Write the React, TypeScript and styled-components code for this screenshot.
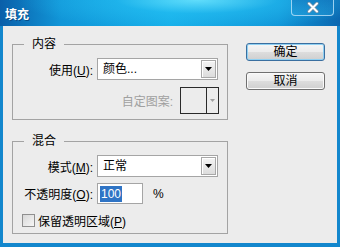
import styled, { createGlobalStyle } from 'styled-components';

const GlobalStyle = createGlobalStyle`
    html, body {
        margin: 0;
        padding: 0;
        background: #ececec;
    }
    * {
        box-sizing: border-box;
    }
`;

const FONT = `"Liberation Sans", "Noto Sans CJK SC", sans-serif`;

const App = () => {
    return (
        <Window>
            <GlobalStyle />
            <TitleBar>
                <Title>填充</Title>
                <CloseButton>
                    <svg width="14" height="11" viewBox="0 0 14 11">
                        <path d="M3 1.5 L11 9.5 M11 1.5 L3 9.5" stroke="#6f8ea8" strokeWidth="3.6" strokeLinecap="round" />
                        <path d="M3 1.5 L11 9.5 M11 1.5 L3 9.5" stroke="#ffffff" strokeWidth="2" strokeLinecap="round" />
                    </svg>
                </CloseButton>
            </TitleBar>
            <Body>
                <LeftColumn>
                    <Group>
                        <Legend>内容</Legend>
                        <Row>
                            <Label>使用(<u>U</u>):</Label>
                            <Select>
                                <SelectText>颜色...</SelectText>
                                <ArrowButton>
                                    <svg width="7" height="4" viewBox="0 0 7 4">
                                        <path d="M0 0 H7 L3.5 4 Z" fill="#000" />
                                    </svg>
                                </ArrowButton>
                            </Select>
                        </Row>
                        <PatternRow>
                            <DisabledLabel>自定图案:</DisabledLabel>
                            <PatternBox>
                                <PatternSwatch />
                                <PatternArrow>
                                    <svg width="5" height="3" viewBox="0 0 5 3">
                                        <path d="M0 0 H5 L2.5 3 Z" fill="#a0a0a0" />
                                    </svg>
                                </PatternArrow>
                            </PatternBox>
                        </PatternRow>
                    </Group>
                    <Group $bottom>
                        <Legend>混合</Legend>
                        <Row>
                            <Label>模式(<u>M</u>):</Label>
                            <Select>
                                <SelectText>正常</SelectText>
                                <ArrowButton>
                                    <svg width="7" height="4" viewBox="0 0 7 4">
                                        <path d="M0 0 H7 L3.5 4 Z" fill="#000" />
                                    </svg>
                                </ArrowButton>
                            </Select>
                        </Row>
                        <OpacityRow>
                            <Label>不透明度(<u>O</u>):</Label>
                            <NumberInput>
                                <Selected>100</Selected>
                            </NumberInput>
                            <Unit>%</Unit>
                        </OpacityRow>
                        <CheckRow>
                            <CheckBox />
                            <span>保留透明区域(<u>P</u>)</span>
                        </CheckRow>
                    </Group>
                </LeftColumn>
                <RightColumn>
                    <Button $default>确定</Button>
                    <Button>取消</Button>
                </RightColumn>
            </Body>
        </Window>
    );
};

const Window = styled.div`
    width: 340px;
    height: 247px;
    display: flex;
    flex-direction: column;
    font-family: ${FONT};
    font-size: 12px;
    color: #000;
`;

const TitleBar = styled.div`
    height: 26px;
    flex-shrink: 0;
    display: flex;
    align-items: flex-start;
    justify-content: space-between;
    padding: 0 6px 0 5px;
    background:
        radial-gradient(ellipse 180px 30px at 58% 0%, rgba(110, 230, 255, 0.85) 0%, rgba(40, 195, 245, 0.5) 45%, rgba(40, 195, 245, 0) 100%),
        linear-gradient(to right, #0a5fa9 0%, #1196d8 18%, #16aee8 50%, #1196d8 82%, #0a67b0 100%);
`;

const Title = styled.div`
    align-self: center;
    color: #fff;
    font-family: "Noto Sans CJK SC", sans-serif;
    font-weight: 700;
    font-size: 12px;
    line-height: 14px;
    text-shadow: 1px 1px 0 rgba(0, 40, 90, 0.55);
    padding-top: 2px;
`;

const CloseButton = styled.div`
    width: 43px;
    height: 16px;
    display: flex;
    align-items: center;
    justify-content: center;
    border: 1px solid rgba(200, 235, 255, 0.75);
    border-top: none;
    border-radius: 0 0 4px 4px;
    background: linear-gradient(to bottom, rgba(20, 120, 190, 0.6), rgba(40, 160, 220, 0.4));
`;

const Body = styled.div`
    flex: 1;
    display: flex;
    gap: 18px;
    padding: 11px 9px 0 9px;
    background: #ececec;
    border: 3px solid #1387cd;
    border-top: none;
    border-bottom-width: 4px;
`;

const LeftColumn = styled.div`
    width: 216px;
    display: flex;
    flex-direction: column;
    gap: 14px;
`;

const Group = styled.fieldset<{ $bottom?: boolean }>`
    margin: 0;
    padding: 7px 0 ${({ $bottom }) => ($bottom ? '6px' : '5px')} 0;
    border: 1px solid #a3a3a3;
    display: flex;
    flex-direction: column;
    gap: ${({ $bottom }) => ($bottom ? '6px' : '7px')};
    min-width: 0;
`;

const Legend = styled.legend`
    margin-left: 11px;
    padding: 0 8px;
    line-height: 14px;
    font-size: 12px;
`;

const Row = styled.div`
    display: flex;
    align-items: center;
    height: 22px;
`;

const OpacityRow = styled(Row)`
    height: 21px;
`;

const Label = styled.span`
    width: 80px;
    margin-right: 4px;
    text-align: right;
    white-space: nowrap;
`;

const Select = styled.div`
    width: 121px;
    height: 22px;
    display: flex;
    align-items: center;
    justify-content: space-between;
    background: #fff;
    border: 1px solid #a5a5a5;
    padding: 0 1px 0 5px;
`;

const SelectText = styled.span`
    line-height: 14px;
`;

const ArrowButton = styled.div`
    width: 15px;
    height: 18px;
    display: flex;
    align-items: center;
    justify-content: center;
    background: linear-gradient(to bottom, #f4f4f4, #dcdcdc);
    border: 1px solid #a8a8a8;
    box-shadow: inset 1px 1px 0 #fff;
`;

const PatternRow = styled.div`
    display: flex;
    align-items: center;
    justify-content: flex-end;
    padding-right: 8px;
    height: 27px;
`;

const DisabledLabel = styled.span`
    color: #a0a0a0;
    margin-right: 7px;
`;

const PatternBox = styled.div`
    width: 39px;
    height: 27px;
    display: flex;
    border: 1px solid #2a2a2a;
    background: #ececec;
`;

const PatternSwatch = styled.div`
    width: 26px;
    border-right: 1px solid #2a2a2a;
`;

const PatternArrow = styled.div`
    flex: 1;
    display: flex;
    align-items: center;
    justify-content: center;
`;

const NumberInput = styled.div`
    width: 46px;
    height: 21px;
    display: flex;
    align-items: center;
    padding-left: 2px;
    background: #fff;
    border: 1px solid #a5a5a5;
`;

const Selected = styled.span`
    background: #2f74c5;
    color: #fff;
    line-height: 16px;
    padding: 0 1px;
`;

const Unit = styled.span`
    margin-left: 10px;
`;

const CheckRow = styled.div`
    display: flex;
    align-items: center;
    gap: 3px;
    padding-left: 9px;
    margin-top: 3px;
    height: 14px;
`;

const CheckBox = styled.div`
    width: 13px;
    height: 13px;
    border: 1px solid #8f8f8f;
    background: linear-gradient(135deg, #d8d8d8, #f6f6f6);
`;

const RightColumn = styled.div`
    display: flex;
    flex-direction: column;
    gap: 11px;
    padding-top: 6px;
`;

const Button = styled.div<{ $default?: boolean }>`
    width: 79px;
    height: 18px;
    display: flex;
    align-items: center;
    justify-content: center;
    line-height: 14px;
    border: 1px solid ${({ $default }) => ($default ? '#3a6fa0' : '#707070')};
    border-radius: 3px;
    background: linear-gradient(to bottom, #f6f6f6 0%, #ebebeb 50%, #dddddd 51%, #cfcfcf 100%);
    box-shadow: ${({ $default }) => ($default ? 'inset 0 0 0 1px #8fd0f2' : 'inset 0 0 0 1px #fafafa')};
`;

export default App;
